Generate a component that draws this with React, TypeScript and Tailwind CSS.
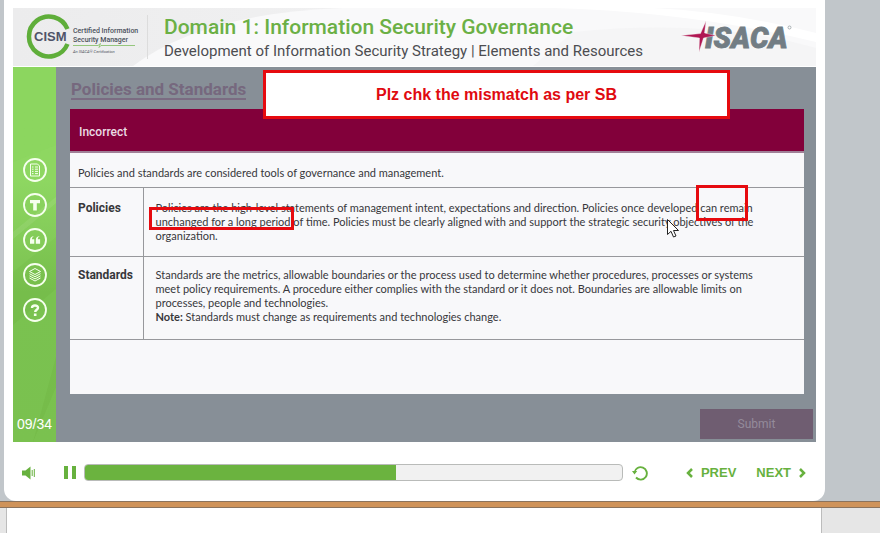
import React from "react";

const sans = "font-[Roboto,'Liberation_Sans',sans-serif]";

function CismLogo() {
  return (
    <svg viewBox="0 0 130 58" className="h-[58px] w-[130px] shrink-0" role="img" aria-label="CISM">
      <path d="M54.500 21A20 20 0 1 0 54.500 36" fill="none" stroke="#5fae3a" strokeWidth="4.500" />
      <text x="21" y="33" fontSize="13" fontWeight="700" fill="#4f5368" fontFamily="Liberation Sans, sans-serif">CISM</text>
      <g fontFamily="Roboto, Liberation Sans, sans-serif" fill="#4c515c">
        <text x="60" y="25" fontSize="7" fontWeight="500">Certified Information</text>
        <text x="60" y="34" fontSize="7" fontWeight="500">Security Manager</text>
        <text x="60" y="45" fontSize="4" fontStyle="italic">An ISACA® Certification</text>
      </g>
      <path d="M60 37.500H85L87.500 35.500L86 39.500L88 37.500H122" fill="none" stroke="#7dbb60" strokeWidth="0.8" />
    </svg>
  );
}

function IsacaLogo() {
  return (
    <svg viewBox="0 -6 112 46" className="h-[46px] w-[112px] shrink-0" role="img" aria-label="ISACA">
      <text x="25" y="28" fontSize="29" fontWeight="900" fontStyle="italic" fill="#727d84" stroke="#727d84" strokeWidth="0.8" fontFamily="Roboto, Liberation Sans, sans-serif">ISACA</text>
      <path d="M26 1L24.500 13L36 15.500L23.500 18L19 32L19.500 18L1 15.500L20.500 13.500Z" fill="#b01652" stroke="#f5f5f5" strokeWidth="0.4" />
      <circle cx="109.500" cy="7.500" r="1.500" fill="none" stroke="#8a9398" strokeWidth="0.7" />
    </svg>
  );
}

function RoundButton({ label, children }: { label: string; children: React.ReactNode }) {
  return (
    <button type="button" aria-label={label} className="size-6 shrink-0">
      <svg viewBox="0 0 24 24" className="size-6" fill="none" stroke="#f6ffee">
        <circle cx="12" cy="12" r="11" strokeWidth="1.800" />
        {children}
      </svg>
    </button>
  );
}

function Sidebar() {
  return (
    <nav className="relative flex w-[43px] shrink-0 flex-col items-center justify-between overflow-hidden bg-linear-to-b from-[#8cd65f] from-30% via-[#76bd4b] via-60% to-[#76bc4a] pt-[91px] pb-2">
      <svg viewBox="0 0 43 375" preserveAspectRatio="none" className="absolute inset-0 size-full" aria-hidden="true">
        <path d="M0 95L43 78V170L0 205Z" fill="#9be070" opacity="0.15" />
        <path d="M0 165L43 130V136L0 172Z" fill="#fff" opacity="0.08" />
        <path d="M0 258L43 222V290L20 375H0Z" fill="#8ed562" opacity="0.2" />
        <path d="M43 320L20 375H43Z" fill="#8ed562" opacity="0.2" />
      </svg>
      <div className="relative flex flex-col gap-[11px]">
        <RoundButton label="Transcript">
          <path d="M7.500 6H14.500L16.500 8V18H7.500ZM9 9H10.500M12 9H15M9 11.200H10.500M12 11.200H15M9 13.400H10.500M12 13.400H15M9 15.600H10.500M12 15.600H15" strokeWidth="1" />
        </RoundButton>
        <RoundButton label="Text">
          <path d="M7 7H17V10.300H13.800V17.500H10.200V10.300H7Z" fill="#f6ffee" stroke="none" />
        </RoundButton>
        <RoundButton label="Glossary">
          <path d="M11 8C9.500 8.900 9 10 9 11.300H11.300V15.700H7V12C7 9.700 8.300 8.200 11 8ZM16.800 8C15.300 8.900 14.800 10 14.800 11.300H17.100V15.700H12.800V12C12.800 9.700 14.100 8.200 16.800 8Z" fill="#f6ffee" stroke="none" />
        </RoundButton>
        <RoundButton label="Resources">
          <path d="M12 5.500L17.500 8.500L12 11.500L6.500 8.500ZM6.500 10.700L12 13.700L17.500 10.700M6.500 12.900L12 15.900L17.500 12.900M6.500 15L12 18L17.500 15" strokeWidth="1" />
        </RoundButton>
        <RoundButton label="Help">
          <path d="M9 10C9 6.700 15 6.700 15 9.800C15 11.800 12.200 11.700 12.200 14" strokeWidth="2.400" />
          <path d="M10.900 15.500H13.500V18H10.900Z" fill="#f6ffee" stroke="none" />
        </RoundButton>
      </div>
      <span className="relative font-['Liberation_Sans',sans-serif] text-sm leading-5 text-white">09/34</span>
    </nav>
  );
}

function Header() {
  return (
    <header className="relative flex h-[58px] items-center justify-between overflow-hidden bg-linear-to-r from-[#ececed] to-[#f6f6f7]">
      <svg viewBox="0 0 803 58" preserveAspectRatio="none" className="absolute inset-0 size-full" aria-hidden="true">
        <path d="M120 58Q190 5 330 0H803V58Z" fill="#f9f9fa" />
        <path d="M560 24Q700 10 803 40V58H520Z" fill="#f5f5f6" />
        <path d="M540 0Q680 4 803 34V25Q720 4 640 0Z" fill="#fff" />
      </svg>
      <div className="relative flex items-center">
        <CismLogo />
        <div className="ml-1 h-11 border-l border-[#dcdcdc]" />
        <div className={`ml-4 pt-1 whitespace-nowrap ${sans}`}>
          <h1 className="text-[21px] leading-6 font-medium text-[#6bb045]">Domain 1: Information Security Governance</h1>
          <h2 className="text-[15px] leading-6 text-[#4c4d51]">Development of Information Security Strategy | Elements and Resources</h2>
        </div>
      </div>
      <div className="relative mr-6">
        <IsacaLogo />
      </div>
    </header>
  );
}

function Dialog() {
  const head = "w-[73px] border-r border-[#97989c] pl-2 text-left align-top font-bold text-xs leading-[14px] font-[Roboto,'Liberation_Sans',sans-serif]";
  return (
    <section className="flex grow flex-col bg-[#f8f8fa] font-[Lato,'Liberation_Sans',sans-serif] text-[11px] leading-[14px] text-[#37373b]">
      <h4 className={`border-b-2 border-[#a08097] bg-[#82003a] pt-[15px] pb-[11px] pl-[9px] text-xs leading-4 font-medium text-[#eadbe3] ${sans}`}>Incorrect</h4>
      <p className="pt-[13px] pb-[7px] pl-2">Policies and standards are considered tools of governance and management.</p>
      <table className="w-full border-collapse border-y border-[#97989c]">
        <tbody>
          <tr className="border-b border-[#97989c]">
            <th scope="row" className={`${head} pt-[13px]`}>Policies</th>
            <td className="pt-[13px] pb-[13px] pl-3 whitespace-nowrap">
              Policies are the high-level statements of management intent, expectations and direction. Policies once developed can remain
              <br />
              unchanged for a long period of time. Policies must be clearly aligned with and support the strategic security objectives of the
              <br />
              organization.
            </td>
          </tr>
          <tr>
            <th scope="row" className={`${head} pt-[11px]`}>Standards</th>
            <td className="pt-[11px] pb-[15px] pl-3 whitespace-nowrap">
              Standards are the metrics, allowable boundaries or the process used to determine whether procedures, processes or systems
              <br />
              meet policy requirements. A procedure either complies with the standard or it does not. Boundaries are allowable limits on
              <br />
              processes, people and technologies.
              <br />
              <b>Note:</b> Standards must change as requirements and technologies change.
            </td>
          </tr>
        </tbody>
      </table>
    </section>
  );
}

function Player() {
  return (
    <footer className="flex h-[59px] items-center pt-[2px] pr-[10px] pl-[9px] font-['Liberation_Sans',sans-serif] text-[#67b13e]">
      <button type="button" aria-label="Volume">
        <svg viewBox="0 0 14 14" className="size-[14px]" fill="currentColor">
          <path d="M0 4.500H3.500L8.500 0.500V13.500L3.500 9.500H0Z" />
          <path d="M10.200 4V10M12.300 3V11" stroke="currentColor" strokeWidth="1" />
        </svg>
      </button>
      <button type="button" aria-label="Pause" className="ml-7 flex gap-1">
        <span className="h-[13px] w-1 bg-[#67b13e]" />
        <span className="h-[13px] w-1 bg-[#67b13e]" />
      </button>
      <div role="progressbar" aria-label="Progress" aria-valuenow={58} className="ml-2 h-[17px] grow overflow-hidden rounded border border-[#b9bbb9] bg-[#f1f1f1]">
        <div className="h-full w-[58%] bg-[#6bb33f]" />
      </div>
      <button type="button" aria-label="Replay" className="ml-[9px]">
        <svg viewBox="0 0 16 16" className="size-4" fill="none" stroke="currentColor">
          <path d="M2.500 7.500A6.200 6.200 0 1 1 4 12.500" strokeWidth="1.900" />
          <path d="M0 6H5.200L2.500 9.500Z" fill="currentColor" stroke="none" />
        </svg>
      </button>
      <button type="button" className="ml-[38px] flex items-center gap-2 text-[13px] leading-4 font-bold">
        <svg viewBox="0 0 7 10" className="h-[10px] w-[7px]" fill="none" stroke="currentColor" strokeWidth="2.500"><path d="M6 1L2 5L6 9" /></svg>
        PREV
      </button>
      <button type="button" className="ml-5 flex items-center gap-2 text-[13px] leading-4 font-bold">
        NEXT
        <svg viewBox="0 0 7 10" className="h-[10px] w-[7px]" fill="none" stroke="currentColor" strokeWidth="2.500"><path d="M1 1L5 5L1 9" /></svg>
      </button>
    </footer>
  );
}

export default function App() {
  return (
    <div className={`relative flex min-h-screen flex-col overflow-hidden bg-[#c1c6ca] ${sans}`}>
      <main className="mr-[55px] ml-1 rounded-b-xl bg-white px-[9px] pt-2">
        <Header />
        <div className="mt-px flex h-[375px]">
          <Sidebar />
          <div className="flex min-w-0 grow flex-col bg-[#878f97] pt-[13px] pr-3 pb-[3px] pl-[14px]">
            <h3 className="mb-[9px] ml-px self-start border-b-2 border-[#7b6c82] text-[17px] leading-[18px] font-bold text-[#76687e]">Policies and Standards</h3>
            <Dialog />
            <button type="button" className="mt-[15px] -mr-[9px] h-[30px] w-[113px] self-end bg-[#6f5d71] text-xs text-[#948b9b]">Submit</button>
          </div>
        </div>
        <Player />
      </main>
      <div className="h-[7px] border-y border-[#8b735d] bg-[#cf935a]" />
      <div className="flex grow bg-[#e6e6e6] pr-[58px] pl-[6px]">
        <div className="grow border-x border-[#bcbcbc] bg-white" />
      </div>

      <div className="absolute top-[70px] left-[263px] flex h-[49px] w-[467px] items-center justify-center border-3 border-[#e60a0f] bg-white font-['Liberation_Sans',sans-serif] text-base font-bold text-[#e00a10]">
        Plz chk the mismatch as per SB
      </div>
      <div className="absolute top-[207px] left-[149px] h-[23px] w-[145px] border-3 border-[#e60a0f]" />
      <div className="absolute top-[185px] left-[696px] h-[36px] w-[52px] border-3 border-[#e60a0f]" />
      <svg viewBox="0 0 12 19" className="absolute top-[219px] left-[667px] h-[19px] w-3" aria-hidden="true">
        <path d="M0.500 0.500V15.500L4 12.300L6.500 18L9 17L6.500 11.500H11.500Z" fill="#fff" stroke="#222" strokeWidth="1" />
      </svg>
    </div>
  );
}
